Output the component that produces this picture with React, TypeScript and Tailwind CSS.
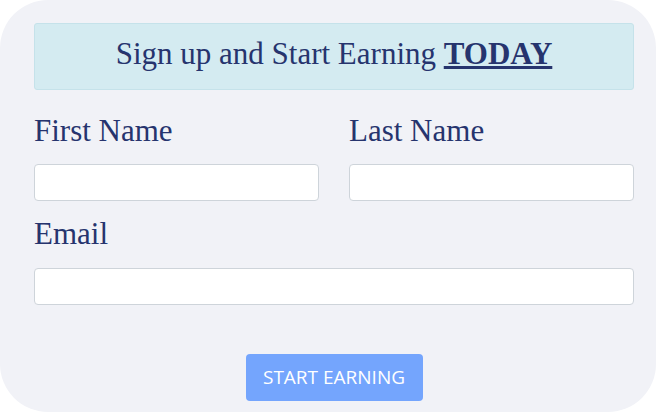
import React from "react";

export default function App() {
  const serif = { fontFamily: '"Liberation Serif", "DejaVu Serif", serif' };
  return (
    <div className="w-[656px] h-[412px] bg-white">
      <div className="h-[412px] rounded-[48px] bg-[#f1f2f7] pt-[23px] pl-[34px] pr-[22px]">
        <div
          className="h-[67px] border border-[#c5e2ea] bg-[#d4ebf1] rounded-[3px] flex items-center justify-center text-[31px] leading-[34px] text-[#26346e] pb-[6px]"
          style={serif}
        >
          <span>
            Sign up and Start Earning <b className="underline font-bold">TODAY</b>
          </span>
        </div>
        <div className="grid grid-cols-2 gap-x-[30px] mt-[24px]">
          <div>
            <div className="text-[31px] leading-[34px] text-[#26346e]" style={serif}>
              First Name
            </div>
            <input className="mt-[16px] block w-full h-[37px] bg-white border border-[#ced4da] rounded-[4px]" />
          </div>
          <div>
            <div className="text-[31px] leading-[34px] text-[#26346e]" style={serif}>
              Last Name
            </div>
            <input className="mt-[16px] block w-full h-[37px] bg-white border border-[#ced4da] rounded-[4px]" />
          </div>
        </div>
        <div className="mt-[16px] text-[31px] leading-[34px] text-[#26346e]" style={serif}>
          Email
        </div>
        <input className="mt-[17px] block w-full h-[37px] bg-white border border-[#ced4da] rounded-[4px]" />
        <div className="mt-[49px] flex justify-center">
          <button
            className="w-[177px] h-[47px] rounded-[4px] bg-[#74a5fd] text-white text-[19px]"
            style={{ fontFamily: '"Open Sans", "Noto Sans", sans-serif' }}
          >
            START EARNING
          </button>
        </div>
      </div>
    </div>
  );
}
